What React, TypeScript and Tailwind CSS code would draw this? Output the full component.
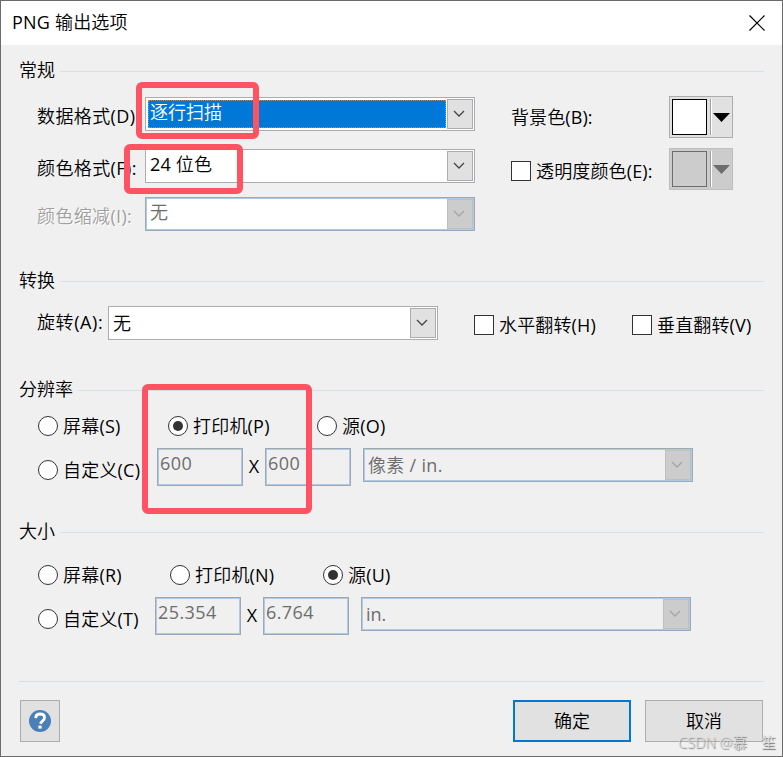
import type { ReactNode } from 'react';
import clsx from 'clsx';

function Section({ title, children, className }: { title: string; children: ReactNode; className: string }) {
  return (
    <section className={className}>
      <div className="flex h-7 items-center gap-[5px] pl-[18px] pr-[18px]">
        <h2 className="-mt-[2px] w-max shrink-0">{title}</h2>
        <div className="h-px flex-1 bg-[#d5dfe5]" />
      </div>
      {children}
    </section>
  );
}

function Chevron({ disabled }: { disabled?: boolean }) {
  return (
    <svg className="mr-[2px]" width="12" height="8" viewBox="0 0 12 8" fill="none" stroke={disabled ? '#a5a5a5' : '#444'} strokeWidth="1.3">
      <path d="M1 1 6 6 11 1" />
    </svg>
  );
}

interface SelectProps {
  value: string;
  disabled?: boolean;
  focused?: boolean;
  raised?: boolean;
  white?: boolean;
  className?: string;
}

function Select({ value, disabled, focused, raised, white, className }: SelectProps) {
  return (
    <div
      className={clsx(
        'flex h-[34px] w-[330px] shrink-0 border p-px',
        disabled ? 'border-[#a3a8b0] shadow-[inset_0_0_0_1px_#abcbe9]' : 'border-[#abadb3]',
        (white || !disabled) && 'bg-white',
        className
      )}
    >
      <div
        className={clsx(
          'flex flex-1 items-center',
          disabled && 'text-[#6d6d6d]',
          focused
            ? 'my-px ml-px mr-px border border-dotted border-[#e8812a] bg-[#0078d7] pl-px text-white'
            : 'pl-[3px]'
        )}
      >
        <span className={clsx('h-[22px] leading-[22px]', raised ? '-mt-[4px]' : '-mt-px')}>{value}</span>
      </div>
      <div
        className={clsx(
          'flex w-[26px] items-center justify-center border',
          disabled ? 'border-[#bfbfbf] bg-[#ccc]' : 'border-[#adadad] bg-[#e1e1e1]'
        )}
      >
        <Chevron disabled={disabled} />
      </div>
    </div>
  );
}

function Field({ value }: { value: string }) {
  return (
    <div className="h-[38px] w-[86px] shrink-0 border border-[#a3a8b0] pl-[2px] pt-[3px] leading-[22px] tracking-[0.4px] text-[#6d6d6d] shadow-[inset_0_0_0_1px_#abcbe9]">
      {value}
    </div>
  );
}

function Checkbox({ label, className }: { label: string; className?: string }) {
  return (
    <div className={clsx('flex h-5 items-center gap-[5px] tracking-[0.15px]', className)}>
      <span className="size-5 shrink-0 border border-[#333] bg-white" />
      <span>{label}</span>
    </div>
  );
}

function Radio({ label, checked, className }: { label: string; checked?: boolean; className?: string }) {
  return (
    <div className={clsx('flex h-5 items-center gap-[5px] tracking-[0.2px]', className)}>
      <span className="flex size-5 shrink-0 items-center justify-center rounded-full border border-[#333] bg-white">
        {checked && <span className="size-[10px] rounded-full bg-[#333]" />}
      </span>
      <span>{label}</span>
    </div>
  );
}

function ColorButton({ disabled }: { disabled?: boolean }) {
  return (
    <div
      className={clsx(
        'flex h-[42px] w-16 shrink-0 border py-[2px] pl-[2px]',
        disabled ? 'border-[#bfbfbf] bg-[#ccc]' : 'border-[#adadad] bg-[#e1e1e1]'
      )}
    >
      <div className={clsx('h-9 w-[35px] border', disabled ? 'border-[#6d6d6d]' : 'border-black bg-white')} />
      <div className="ml-[3px] h-9 w-[2px] border-l border-r border-l-[#a0a0a0] border-r-white" />
      <svg className="ml-px mt-[14px]" width="17" height="9" viewBox="0 0 17 9">
        <path d="M0 0H17L8.5 9Z" fill={disabled ? '#6d6d6d' : '#000'} />
      </svg>
    </div>
  );
}

export default function App() {
  return (
    <div className="relative flex h-[757px] w-[783px] flex-col overflow-hidden whitespace-nowrap border border-[#6b6b6b] bg-[#f0f0f0] font-['Open_Sans','Noto_Sans_CJK_SC_DemiLight','Noto_Sans_CJK_SC',sans-serif] text-[18px] font-normal leading-6 text-black">
      <header className="flex h-11 shrink-0 items-center justify-between bg-white pl-[11px] pr-[17px]">
        <h1 className="-mt-[2px] tracking-[0.2px]">PNG 输出选项</h1>
        <svg className="-mt-px" width="16" height="16" viewBox="0 0 16 16" stroke="#000" strokeWidth="1.2">
          <path d="M.5.5 15.5 15.5M15.5.5.5 15.5" />
        </svg>
      </header>

      <Section title="常规" className="h-[210px] shrink-0 pt-3">
        <div className="flex pl-9">
          <div className="w-[474px] pt-3">
            <div className="flex">
              <span className="mt-[7px] w-[108px] tracking-[0.4px]">数据格式(D):</span>
              <Select value="逐行扫描" focused raised />
            </div>
            <div className="mt-[18px] flex">
              <span className="mt-[7px] w-[108px] tracking-[0.4px]">颜色格式(F):</span>
              <Select value="24 位色" raised className="tracking-[0.2px]" />
            </div>
            <div className="mt-[14px] flex">
              <span className="mt-[7px] w-[108px] tracking-[0.35px] text-[#a0a0a0] [text-shadow:1px_1px_0_#fff]">
                颜色缩减(I):
              </span>
              <Select value="无" disabled white raised />
            </div>
          </div>
          <div className="w-[222px] pt-[11px]">
            <div className="flex h-[42px] items-center justify-between">
              <span className="-mt-px tracking-[0.1px]">背景色(B):</span>
              <ColorButton />
            </div>
            <div className="mt-[10px] flex h-[42px] items-center justify-between">
              <Checkbox label="透明度颜色(E):" className="mt-1" />
              <ColorButton disabled />
            </div>
          </div>
        </div>
      </Section>

      <Section title="转换" className="h-[109px] shrink-0 pt-3">
        <div className="mt-[11px] flex pl-9">
          <span className="mt-1 w-[71px] tracking-[0.6px]">旋转(A):</span>
          <Select value="无" />
          <Checkbox label="水平翻转(H)" className="ml-9 mt-[9px] w-[158px]" />
          <Checkbox label="垂直翻转(V)" className="mt-[9px]" />
        </div>
      </Section>

      <Section title="分辨率" className="h-[142px] shrink-0 pt-3">
        <div className="mt-3 flex pl-[37px]">
          <Radio label="屏幕(S)" className="w-[130px]" />
          <Radio label="打印机(P)" checked className="w-[149px]" />
          <Radio label="源(O)" />
        </div>
        <div className="mt-3 flex pl-[37px]">
          <Radio label="自定义(C)" className="mt-3 w-[119px]" />
          <Field value="600" />
          <span className="mt-[6px] w-[22px] text-center">X</span>
          <Field value="600" />
          <Select value="像素 / in." disabled className="ml-3 tracking-[0.3px]" />
        </div>
      </Section>

      <Section title="大小" className="h-[163px] shrink-0 pt-3">
        <div className="mt-[19px] flex pl-[37px]">
          <Radio label="屏幕(R)" className="w-[132px]" />
          <Radio label="打印机(N)" className="w-[153px]" />
          <Radio label="源(U)" checked />
        </div>
        <div className="mt-3 flex pl-[37px]">
          <Radio label="自定义(T)" className="mt-3 w-[117px]" />
          <Field value="25.354" />
          <span className="mt-[6px] w-[22px] text-center">X</span>
          <Field value="6.764" />
          <Select value="in." disabled className="ml-3" />
        </div>
      </Section>

      <footer className="ml-[18px] mr-[18px] mt-3 flex border-t border-[#d5dfe5] pl-px pr-px pt-[18px]">
        <button className="flex h-[42px] w-10 items-center justify-center border border-[#adadad] bg-[#e1e1e1]">
          <svg width="22" height="22" viewBox="0 0 22 22">
            <circle cx="11" cy="11" r="11" fill="#4a7fb8" />
            <path d="M6.7 8.1C6.8 5.6 8.6 4 11.1 4c2.6 0 4.4 1.5 4.4 3.7 0 3-3.2 3.3-4.1 6.1" fill="none" stroke="#fff" strokeWidth="2.8" />
            <path d="M9.4 15.6h3.2v3H9.4Z" fill="#fff" />
          </svg>
        </button>
        <button className="ml-auto h-[42px] w-[118px] border-2 border-[#0078d7] bg-[#e1e1e1]">确定</button>
        <button className="ml-[14px] h-[42px] w-[118px] border border-[#adadad] bg-[#e1e1e1]">取消</button>
      </footer>

      {/* highlight frames drawn over the dialog */}
      <div className="absolute left-[135px] top-[81px] h-[57px] w-[123px] rounded-[6px] border-6 border-[#ff5263]" />
      <div className="absolute left-[123px] top-[143px] h-[50px] w-[119px] rounded-[6px] border-6 border-[#ff5263]" />
      <div className="absolute left-[141px] top-[383px] h-[130px] w-[170px] rounded-[6px] border-6 border-[#ff5263]" />

      <div className="absolute left-[677px] top-[732px] text-[14.5px] font-light leading-5 text-[#dcdcdc] [text-shadow:1px_1px_1px_#777]">
        CSDN @慕　笙
      </div>
    </div>
  );
}
